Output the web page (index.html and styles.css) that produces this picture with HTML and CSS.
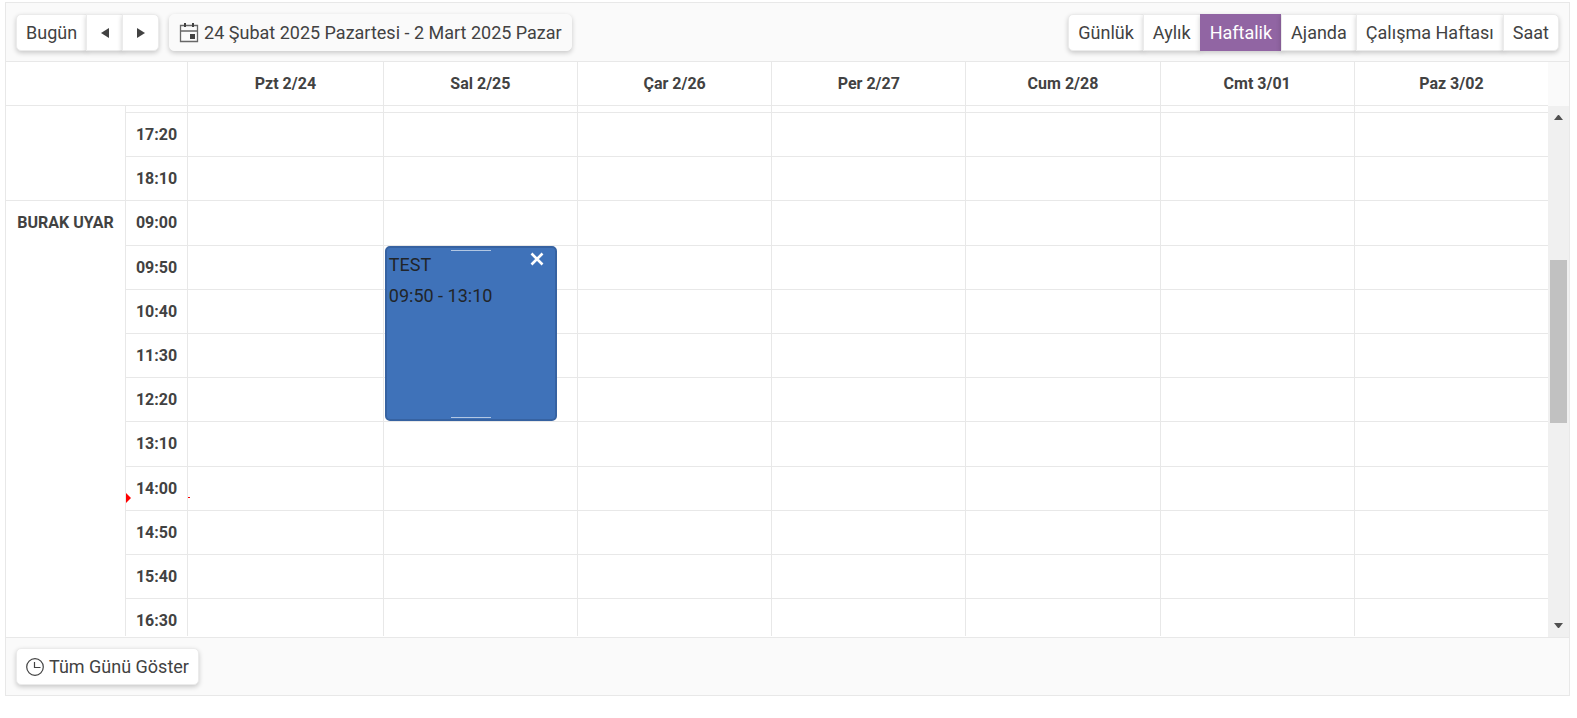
FILE: index.html
```html
<!DOCTYPE html>
<html lang="tr">
<head>
<meta charset="utf-8">
<title>Haftalik</title>
<link rel="stylesheet" href="styles.css">
</head>
<body>
<main class="scheduler">
  <header class="toolbar">
    <div class="toolbar-side">
      <div class="button-group">
        <button class="btn" type="button">Bugün</button>
        <button class="btn btn-arrow" type="button" aria-label="Önceki"><svg width="16" height="16" viewBox="0 0 16 16"><path d="M12 3v10L4 8z"/></svg></button>
        <button class="btn btn-arrow" type="button" aria-label="Sonraki"><svg width="16" height="16" viewBox="0 0 16 16"><path d="M4 3v10l8-5z"/></svg></button>
      </div>
      <button class="btn btn-date" type="button"><svg width="20" height="20" viewBox="0 0 20 20"><path fill="none" stroke="currentColor" stroke-opacity=".8" stroke-width="1.3" d="M1.500 2.500h17v16h-17zM1.500 8h17"/><path d="M5 0h2v4H5zM13 0h2v4h-2zM11 11h5v5h-5z"/></svg><span>24 Şubat 2025 Pazartesi - 2 Mart 2025 Pazar</span></button>
    </div>
    <nav class="button-group">
      <button class="btn" type="button">Günlük</button>
      <button class="btn" type="button">Aylık</button>
      <button class="btn btn-selected" type="button">Haftalik</button>
      <button class="btn" type="button">Ajanda</button>
      <button class="btn" type="button">Çalışma Haftası</button>
      <button class="btn" type="button">Saat</button>
    </nav>
  </header>

  <div class="calendar">
    <div class="viewport">
      <table class="week">
        <colgroup><col class="col-person"><col class="col-time"><col class="col-first"><col span="6"></colgroup>
        <thead>
          <tr><td colspan="2"></td><th scope="col">Pzt 2/24</th><th scope="col">Sal 2/25</th><th scope="col">Çar 2/26</th><th scope="col">Per 2/27</th><th scope="col">Cum 2/28</th><th scope="col">Cmt 3/01</th><th scope="col">Paz 3/02</th></tr>
        </thead>
        <tbody>
          <tr class="row-cut"><td class="person" rowspan="3"></td><td></td><td></td><td></td><td></td><td></td><td></td><td></td><td></td></tr>
          <tr><th scope="row">17:20</th><td></td><td></td><td></td><td></td><td></td><td></td><td></td></tr>
          <tr><th scope="row">18:10</th><td></td><td></td><td></td><td></td><td></td><td></td><td></td></tr>
          <tr><th class="person" rowspan="10" scope="rowgroup">BURAK UYAR</th><th scope="row">09:00</th><td></td><td></td><td></td><td></td><td></td><td></td><td></td></tr>
          <tr><th scope="row">09:50</th><td></td>
            <td>
              <article class="event">
                <div>TEST</div>
                <div>09:50 - 13:10</div>
                <button class="event-close" type="button" aria-label="Sil"><svg width="14" height="14" viewBox="0 0 14 14"><path fill="none" stroke="currentColor" stroke-width="2.6" d="M1.5 1.5l11 11M12.5 1.5l-11 11"/></svg></button>
              </article>
            </td>
            <td></td><td></td><td></td><td></td><td></td></tr>
          <tr><th scope="row">10:40</th><td></td><td></td><td></td><td></td><td></td><td></td><td></td></tr>
          <tr><th scope="row">11:30</th><td></td><td></td><td></td><td></td><td></td><td></td><td></td></tr>
          <tr><th scope="row">12:20</th><td></td><td></td><td></td><td></td><td></td><td></td><td></td></tr>
          <tr><th scope="row">13:10</th><td></td><td></td><td></td><td></td><td></td><td></td><td></td></tr>
          <tr class="row-now"><th scope="row">14:00</th><td></td><td></td><td></td><td></td><td></td><td></td><td></td></tr>
          <tr><th scope="row">14:50</th><td></td><td></td><td></td><td></td><td></td><td></td><td></td></tr>
          <tr><th scope="row">15:40</th><td></td><td></td><td></td><td></td><td></td><td></td><td></td></tr>
          <tr class="row-last"><th scope="row">16:30</th><td></td><td></td><td></td><td></td><td></td><td></td><td></td></tr>
        </tbody>
      </table>
    </div>
    <div class="scroll-column">
      <div class="scrollbar">
        <svg class="scroll-arrow" width="9" height="5" viewBox="0 0 9 5"><path d="M0 5h9L5 0H4z"/></svg>
        <div class="scroll-track"><div class="scroll-thumb"></div></div>
        <svg class="scroll-arrow" width="9" height="5" viewBox="0 0 9 5"><path d="M0 0h9L5 5H4z"/></svg>
      </div>
    </div>
  </div>

  <footer class="footer">
    <button class="btn btn-footer" type="button"><svg width="18" height="18" viewBox="0 0 18 18"><path fill="none" stroke="currentColor" stroke-width="1.2" d="M9 .7a8.3 8.3 0 1 1 0 16.6A8.3 8.3 0 0 1 9 .7zM8.5 4v5.500h6"/></svg><span>Tüm Günü Göster</span></button>
  </footer>
</main>
</body>
</html>
```

FILE: styles.css
```css
* {
  box-sizing: border-box;
}

body {
  margin: 2px 7px 0 5px;
  background: #fff;
  color: #424242;
  font: 18px/27px Roboto, sans-serif;
}

svg {
  display: block;
  fill: currentColor;
}

.scheduler {
  border: 1px solid #e8e8e8;
  background: #fff;
}

.toolbar {
  display: flex;
  justify-content: space-between;
  padding: 11px 10px 10px;
  border-bottom: 1px solid #e8e8e8;
  background: #fafafa;
}

.toolbar-side {
  display: flex;
  gap: 10px;
}

.button-group {
  display: flex;
}

.btn {
  display: flex;
  align-items: center;
  justify-content: center;
  gap: 5px;
  height: 37px;
  margin: 0;
  padding: 0 9px;
  border: 1px solid #ebebeb;
  border-radius: 0;
  background: #fff;
  box-shadow: 0 2px 5px rgba(0, 0, 0, 0.2);
  color: inherit;
  font: inherit;
  white-space: nowrap;
}

.button-group .btn + .btn {
  margin-left: -1px;
}

.button-group .btn:first-child,
.btn-date,
.btn-footer {
  border-top-left-radius: 5px;
  border-bottom-left-radius: 5px;
}

.button-group .btn:last-child,
.btn-date,
.btn-footer {
  border-top-right-radius: 5px;
  border-bottom-right-radius: 5px;
}

.button-group .btn-arrow {
  width: 37px;
}

.btn-date {
  border-color: #fafafa;
  background: #fafafa;
}

.btn-selected {
  border-color: #9165a3;
  background: #9165a3;
  color: #fff;
}

.calendar {
  display: flex;
}

.viewport {
  flex: 1;
  min-width: 0;
  padding-bottom: 1px;
}

.week {
  width: 100%;
  table-layout: fixed;
  border-collapse: separate;
  border-spacing: 0;
  font-size: 16px;
  line-height: 24px;
}

.col-person {
  width: 119px;
}

.col-time {
  width: 62px;
}

.col-first {
  width: 12.7%;
}

.week th,
.week td {
  position: relative;
  height: 44px;
  padding: 0;
  border: solid #e8e8e8;
  border-width: 0 0 1px 1px;
  text-align: center;
  font-weight: 700;
}

.week td:first-child,
.week .person {
  border-left: 0;
}

.week .person {
  padding-top: 10px;
  vertical-align: top;
}

.week .row-cut td {
  height: 7px;
}

.week tbody tr:nth-child(5n + 4) td {
  height: 45px;
}

.week .row-last th,
.week .row-last td {
  height: 37px;
  border-bottom: 0;
}

.week .row-last th {
  padding-top: 6px;
}

.week [rowspan="10"] {
  border-bottom: 0;
}

.row-now th::before {
  content: "";
  position: absolute;
  top: 26px;
  left: 0;
  border: solid transparent;
  border-width: 5px 0 5px 5px;
  border-left-color: #f00;
}

.row-now th + td::before {
  content: "";
  position: absolute;
  top: 30px;
  left: 0;
  width: 2px;
  height: 1px;
  background: #f00;
}

.event {
  position: absolute;
  z-index: 1;
  top: 0;
  left: 1px;
  right: 20px;
  height: 175px;
  padding: 1px 2px;
  border: 2px solid #3662a1;
  border-radius: 5px;
  background: #3f72b9;
  color: #212529;
  font-size: 18px;
  font-weight: 400;
  line-height: 31px;
  text-align: left;
}

.event::before,
.event::after {
  content: "";
  position: absolute;
  top: 2px;
  left: 50%;
  width: 40px;
  height: 1px;
  margin-left: -20px;
  background: #b2c7e3;
}

.event::after {
  top: auto;
  bottom: 1px;
}

.event-close {
  position: absolute;
  top: 4px;
  right: 11px;
  padding: 0;
  border: 0;
  background: none;
  color: #fff;
}

.scroll-column {
  display: flex;
  width: 21px;
  padding-top: 44px;
  background: #fafafa;
}

.scrollbar {
  display: flex;
  flex: 1;
  flex-direction: column;
  align-items: center;
  justify-content: space-between;
  padding: 9px 2px;
  background: #f0f0f0;
  color: #505050;
}

.scroll-track {
  display: flex;
  flex: 1;
  align-self: stretch;
  padding-top: 140px;
}

.scroll-thumb {
  flex: 1;
  height: 163px;
  background: #c1c1c1;
}

.footer {
  padding: 10px;
  border-top: 1px solid #e8e8e8;
  background: #fafafa;
}
```
